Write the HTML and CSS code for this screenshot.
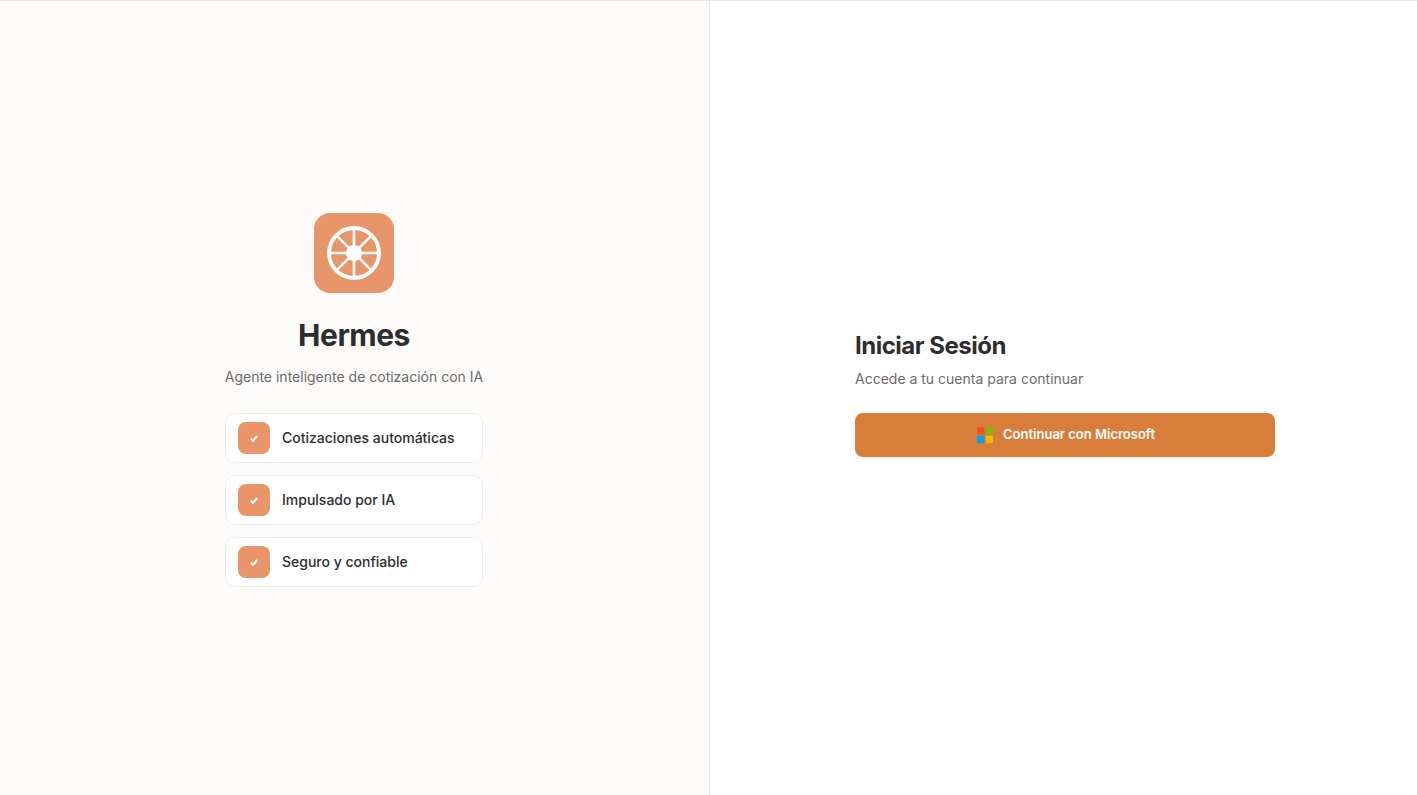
FILE: index.html
```html
<!DOCTYPE html>
<html lang="es">
<head>
<meta charset="utf-8">
<title>Hermes</title>
<link rel="stylesheet" href="styles.css">
</head>
<body>
<main class="page">
  <section class="brand">
    <div class="brand-inner">
      <div class="logo">
        <svg width="56" height="56" viewBox="0 0 56 56" fill="none" stroke="#fff" stroke-width="2.6">
          <circle cx="28" cy="28" r="25" stroke-width="3.8"/>
          <path d="M28 3V53M3 28H53M10.3 10.3L45.7 45.7M45.7 10.3L10.3 45.7"/>
          <circle cx="28" cy="28" r="8" fill="#fff" stroke="none"/>
        </svg>
      </div>
      <h1 class="brand-title">Hermes</h1>
      <p class="brand-sub">Agente inteligente de cotización con IA</p>
      <ul class="features">
        <li class="feature"><span class="tick"><svg width="8" height="7" viewBox="0 0 8 7"><path d="M0.8 3.6L3 5.8L7.2 1" fill="none" stroke="#fff" stroke-width="2"/></svg></span><span>Cotizaciones automáticas</span></li>
        <li class="feature"><span class="tick"><svg width="8" height="7" viewBox="0 0 8 7"><path d="M0.8 3.6L3 5.8L7.2 1" fill="none" stroke="#fff" stroke-width="2"/></svg></span><span>Impulsado por IA</span></li>
        <li class="feature"><span class="tick"><svg width="8" height="7" viewBox="0 0 8 7"><path d="M0.8 3.6L3 5.8L7.2 1" fill="none" stroke="#fff" stroke-width="2"/></svg></span><span>Seguro y confiable</span></li>
      </ul>
    </div>
  </section>
  <section class="auth">
    <div class="auth-inner">
      <h2 class="auth-title">Iniciar Sesión</h2>
      <p class="auth-sub">Accede a tu cuenta para continuar</p>
      <button class="ms-btn" type="button">
        <svg width="16" height="16" viewBox="0 0 16 16"><rect width="7.3" height="7.3" fill="#f25022"/><rect x="8.7" width="7.3" height="7.3" fill="#7fba00"/><rect y="8.7" width="7.3" height="7.3" fill="#00a4ef"/><rect x="8.7" y="8.7" width="7.3" height="7.3" fill="#ffb900"/></svg>
        <span class="ms-label">Continuar con Microsoft</span>
      </button>
    </div>
  </section>
</main>
</body>
</html>
```
FILE: styles.css
```css
* { box-sizing: border-box; }
html, body { margin: 0; height: 100%; }
body { font-family: Inter, "Liberation Sans", sans-serif; color: #2d2d2d; background: #fff; overflow: hidden; }
.page { display: flex; height: 795px; border-top: 1px solid #e5e5e3; }
.brand { width: 710px; background: #fcfbf9; border-right: 1px solid #e8e6e3; padding: 4px 1px 0 0; display: flex; align-items: center; justify-content: center; }
.brand-inner { display: flex; flex-direction: column; align-items: center; }
.logo { width: 80px; height: 80px; border-radius: 16px; background: #e8956a; display: flex; align-items: center; justify-content: center; margin-bottom: 24px; }
.brand-title { margin: 0 0 12px; font-size: 30px; line-height: 36px; font-weight: 700; letter-spacing: -0.5px; }
.brand-sub { margin: 0 0 24px; font-size: 14px; line-height: 24px; color: #6b6b6b; }
.features { list-style: none; margin: 0; padding: 0; width: 258px; display: flex; flex-direction: column; gap: 12px; }
.feature { height: 50px; display: flex; align-items: center; gap: 12px; padding: 0 12px; background: #fff; border: 1px solid #eeece9; border-radius: 10px; font-size: 14px; line-height: 20px; font-weight: 500; color: #2d2d2d; }
.tick { width: 32px; height: 32px; border-radius: 8px; background: #e8956a; display: flex; align-items: center; justify-content: center; }
.auth { flex: 1; display: flex; align-items: center; padding: 0 0 9px 145px; }
.auth-inner { width: 420px; }
.auth-title { margin: 0 0 7px; font-size: 24px; line-height: 32px; font-weight: 700; letter-spacing: -0.5px; }
.auth-sub { margin: 0 0 24px; font-size: 14px; line-height: 20px; color: #6b6b6b; }
.ms-btn { width: 100%; height: 44px; border: 0; border-radius: 8px; padding: 0 0 0 2px; background: #d97d3a; color: #fff; font: 600 13px Inter, "Liberation Sans", sans-serif; display: flex; align-items: center; justify-content: center; gap: 10px; }
.ms-label { padding-bottom: 2px; }
```
